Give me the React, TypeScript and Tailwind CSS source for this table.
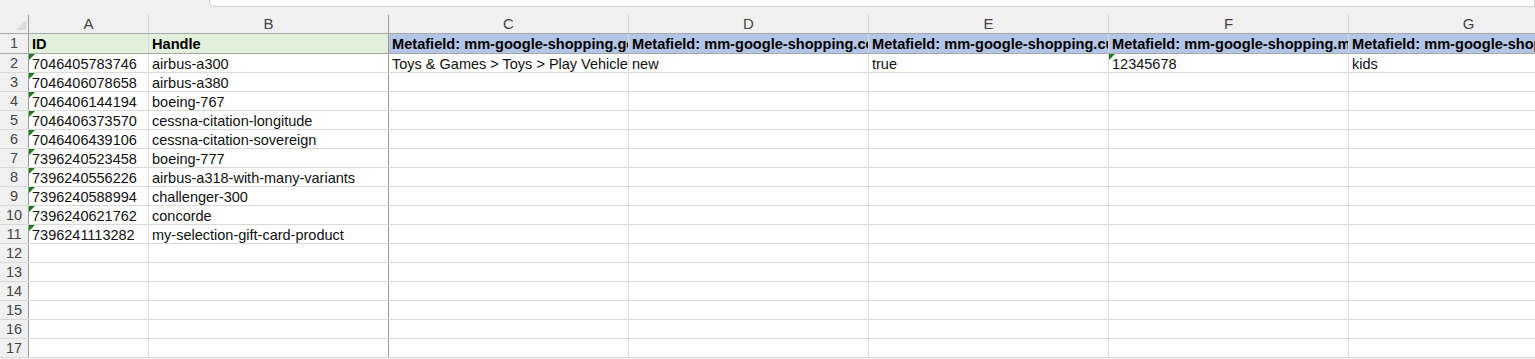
import React from 'react';

const cols = [
  { key: 'A', w: 'w-[120px]' },
  { key: 'B', w: 'w-[240px]' },
  { key: 'C', w: 'w-[240px]' },
  { key: 'D', w: 'w-[240px]' },
  { key: 'E', w: 'w-[240px]' },
  { key: 'F', w: 'w-[240px]' },
  { key: 'G', w: 'w-[240px]' },
];

const headers = [
  'ID',
  'Handle',
  'Metafield: mm-google-shopping.google_product_category',
  'Metafield: mm-google-shopping.condition',
  'Metafield: mm-google-shopping.custom_product',
  'Metafield: mm-google-shopping.mpn',
  'Metafield: mm-google-shopping.age_group',
];

const products = [
  ['7046405783746', 'airbus-a300'],
  ['7046406078658', 'airbus-a380'],
  ['7046406144194', 'boeing-767'],
  ['7046406373570', 'cessna-citation-longitude'],
  ['7046406439106', 'cessna-citation-sovereign'],
  ['7396240523458', 'boeing-777'],
  ['7396240556226', 'airbus-a318-with-many-variants'],
  ['7396240588994', 'challenger-300'],
  ['7396240621762', 'concorde'],
  ['7396241113282', 'my-selection-gift-card-product'],
];

// row 2 has the metafield values
const extra: Record<number, string[]> = {
  0: ['Toys & Games > Toys > Play Vehicles', 'new', 'true', '12345678', 'kids'],
};

function Flag() {
  return (
    <svg className="absolute left-0 top-0" width="6" height="6" viewBox="0 0 6 6">
      <polygon points="0,0 6,0 0,6" fill="#1f7a1f" />
    </svg>
  );
}

function Cell({ w, text, bold, bg, flag, frozen }: { w: string; text?: string; bold?: boolean; bg?: string; flag?: boolean; frozen?: boolean }) {
  return (
    <div
      className={`relative shrink-0 ${w} h-full flex items-center pl-[3px] overflow-hidden whitespace-nowrap border-r ${
        frozen ? 'border-r-[#9b9b9b]' : 'border-r-[#dadada]'
      } ${bold ? 'font-bold text-black text-[14.6px]' : 'text-[#111] text-[14.5px]'} ${bg ?? 'bg-white'}`}
    >
      {flag && <Flag />}
      <span className="leading-none pt-[2px]">{text}</span>
    </div>
  );
}

function RowNum({ n }: { n: number }) {
  return (
    <div className="shrink-0 w-[29px] h-full flex items-center justify-center pt-[1px] border-r border-r-[#9b9b9b] bg-[#f0f0f0] text-[#444] text-[14.5px]">
      {n}
    </div>
  );
}

export default function App() {
  const rows: string[][] = [];
  for (let i = 0; i < 16; i++) {
    if (i < products.length) rows.push([...products[i], ...(extra[i] ?? ['', '', '', '', ''])]);
    else rows.push(['', '', '', '', '', '', '']);
  }

  return (
    <div className="w-[1535px] h-[359px] overflow-hidden bg-[#f0f0f0] font-['Liberation_Sans',Arial,sans-serif] text-[14px]">
      {/* name / formula bar edge */}
      <div className="h-[15px]">
        <div className="ml-[209px] h-[7px] bg-white border border-t-0 border-[#d0d0d0] rounded-bl-[5px]" />
      </div>

      {/* column letters */}
      <div className="flex h-[19px] border-b border-b-[#a8a8a8] bg-[#f0f0f0]">
        <div className="relative shrink-0 w-[29px] h-full border-r border-r-[#9b9b9b]">
          <svg className="absolute left-[16px] top-[5px]" width="10" height="10" viewBox="0 0 10 10">
            <polygon points="10,0 10,10 0,10" fill="#dcdcdc" />
          </svg>
        </div>
        {cols.map((c) => (
          <div
            key={c.key}
            className={`shrink-0 ${c.w} h-full flex items-center justify-center text-[15px] text-[#444] border-r ${
              c.key === 'B' ? 'border-r-[#9b9b9b]' : 'border-r-[#d4d4d4]'
            }`}
          >
            {c.key}
          </div>
        ))}
      </div>

      {/* header row 1 */}
      <div className="flex h-[20px] border-b border-b-[#a8a8a8]">
        <RowNum n={1} />
        {cols.map((c, i) => (
          <Cell
            key={c.key}
            w={c.w}
            text={headers[i]}
            bold
            bg={i < 2 ? 'bg-[#e2efda]' : 'bg-[#b4c6e7]'}
            frozen={c.key === 'B'}
          />
        ))}
      </div>

      {/* data rows */}
      {rows.map((r, ri) => (
        <div key={ri} className="flex h-[19px] border-b border-b-[#dadada]">
          <RowNum n={ri + 2} />
          {cols.map((c, ci) => (
            <Cell
              key={c.key}
              w={c.w}
              text={r[ci]}
              flag={(ci === 0 && ri < products.length) || (ci === 5 && ri === 0)}
              frozen={c.key === 'B'}
            />
          ))}
        </div>
      ))}
    </div>
  );
}
